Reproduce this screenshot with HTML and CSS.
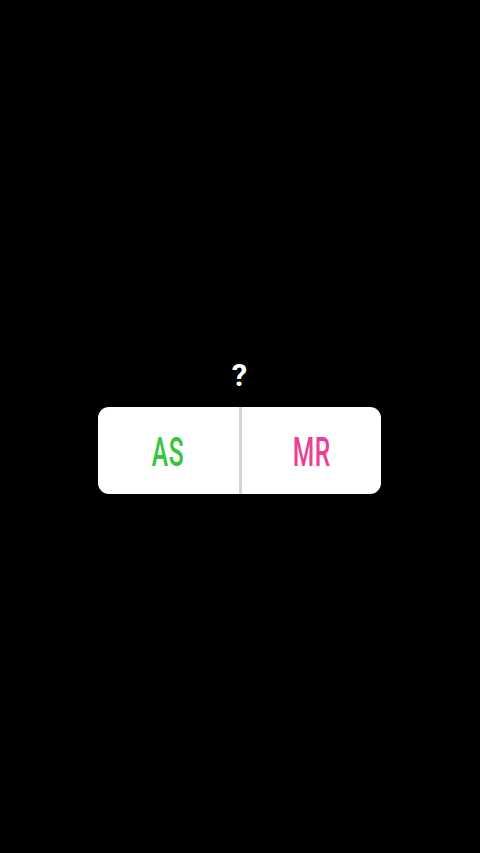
FILE: index.html
```html
<!DOCTYPE html>
<html>
<head>
<meta charset="utf-8">
<link rel="stylesheet" href="styles.css">
</head>
<body>
<main class="stage">
  <div class="question">?</div>
  <div class="poll">
    <div class="option"><span class="label green">AS</span></div>
    <div class="option divided"><span class="label pink">MR</span></div>
  </div>
</main>
</body>
</html>
```
FILE: styles.css
```css
html, body {
  margin: 0;
  padding: 0;
  background: #000;
}
.stage {
  width: 480px;
  height: 853px;
  display: flex;
  flex-direction: column;
  align-items: center;
  padding-top: 358px;
  padding-right: 1px;
  box-sizing: border-box;
}
.question {
  font-family: Roboto, "Liberation Sans", sans-serif;
  font-weight: 700;
  font-size: 31px;
  line-height: 36px;
  height: 36px;
  color: #fff;
  margin-bottom: 13px;
}
.poll {
  width: 283px;
  height: 87px;
  background: #fff;
  border-radius: 11px;
  display: grid;
  grid-template-columns: 141px 1fr;
  overflow: hidden;
}
.option {
  display: flex;
  align-items: center;
  justify-content: center;
  padding-top: 3px;
}
.divided {
  border-left: 3px solid #d4d4d4;
}
.label {
  display: inline-block;
  font-family: Roboto, "Liberation Sans", sans-serif;
  font-weight: 500;
  font-size: 41px;
  line-height: 41px;
  transform: scaleX(0.6);
  letter-spacing: 1px;
}
.green { color: #35c63c; }
.pink { color: #ec3f95; }
```
